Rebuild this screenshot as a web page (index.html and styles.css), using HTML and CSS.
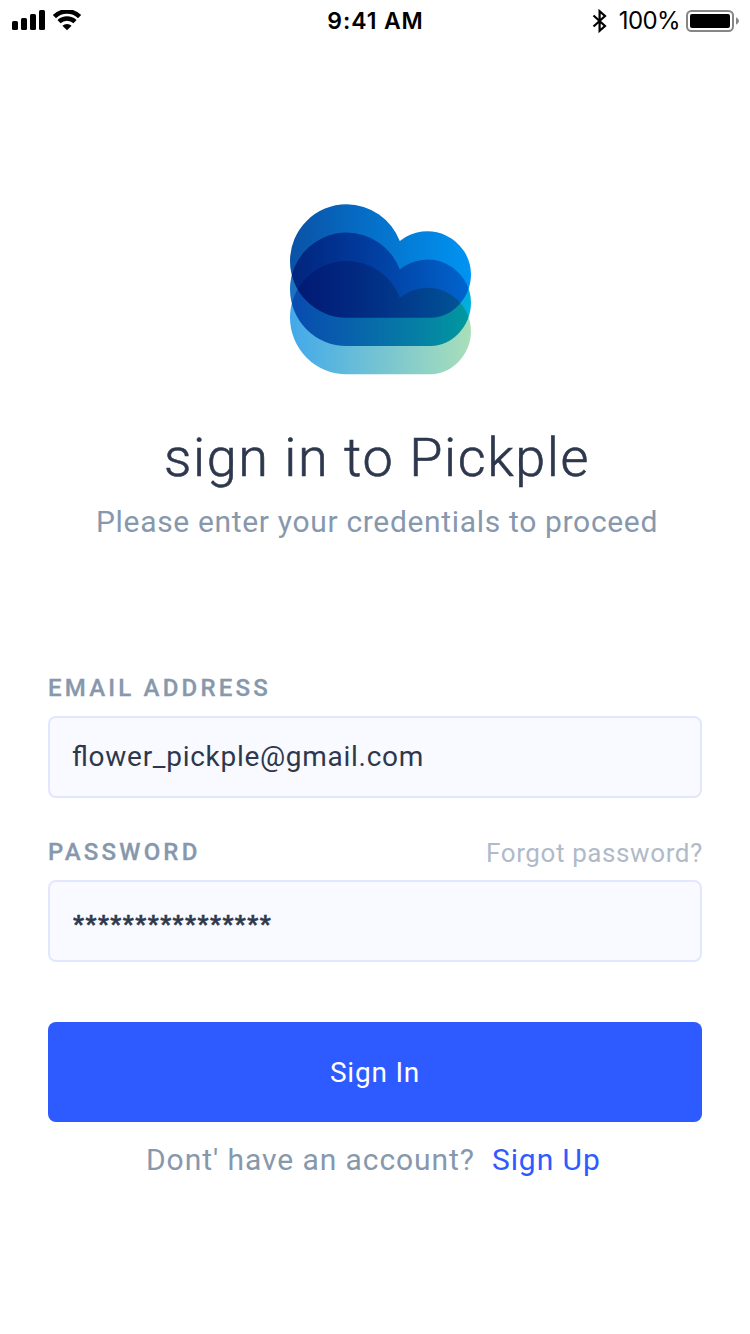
FILE: index.html
```html
<!DOCTYPE html>
<html lang="en">
<head>
<meta charset="utf-8">
<title>Pickple – Sign in</title>
<link rel="stylesheet" href="styles.css">
</head>
<body>
<div class="status">
  <svg class="signal" width="72" height="22" viewBox="0 0 72 22">
    <rect x="1" y="11" width="6" height="9" rx="1.5"/><rect x="10" y="8" width="6" height="12" rx="1.5"/><rect x="19" y="4" width="6" height="16" rx="1.5"/><rect x="28" y="0" width="6" height="20" rx="1.5"/>
    <path class="wave" d="M43.4 6.6a18 18 0 0 1 25.2 0M48 11.6a11.8 11.8 0 0 1 16 0"/>
    <path d="M56 20.3l-4.6-4.6a6.8 6.8 0 0 1 9.2 0z"/>
  </svg>
  <span class="time">9:41 AM</span>
  <div class="power">
    <svg class="bluetooth" width="16" height="24" viewBox="0 0 16 24"><path d="M1.5 6.5L13 17 7.6 21.8V2.2L13 7 1.5 17.5"/></svg>
    <span class="percent">100%</span>
    <svg width="54" height="24" viewBox="0 0 54 24"><rect class="case" x="1" y="2" width="46" height="20" rx="4.5"/><rect x="4" y="5" width="40" height="14" rx="2"/><path class="cap" d="M50 8.3q3 1.5 3 3.7t-3 3.7z"/></svg>
  </div>
</div>
<main class="page">
  <svg class="logo" width="182" height="172" viewBox="0 0 182 172">
    <defs>
      <linearGradient id="top"><stop offset="0" stop-color="#0a52a6"/><stop offset="1" stop-color="#0094f3"/></linearGradient>
      <linearGradient id="mid"><stop offset="0" stop-color="#1c70c0"/><stop offset="1" stop-color="#00b0da"/></linearGradient>
      <linearGradient id="low"><stop offset="0" stop-color="#42a9ea"/><stop offset="1" stop-color="#a9dfba"/></linearGradient>
      <path id="cloud" d="M56.7 0.3A56.7 56.7 0 1 0 56.7 113.7H141C162 113.7 181 94 181 70.5A43.6 43.6 0 0 0 109.8 37.1A56.7 56.7 0 0 0 56.7 0.3z"/>
    </defs>
    <use class="layer" href="#cloud" y="56.6" fill="url(#low)"/>
    <use class="layer" href="#cloud" y="28.3" fill="url(#mid)"/>
    <use class="layer" href="#cloud" fill="url(#top)"/>
  </svg>
  <h1 class="title">sign in to Pickple</h1>
  <p class="subtitle">Please enter your credentials to proceed</p>
  <form class="form">
    <div class="row"><label class="label" for="email">EMAIL ADDRESS</label></div>
    <input class="field address" id="email" type="text" value="flower_pickple@gmail.com">
    <div class="row second"><label class="label" for="password">PASSWORD</label><a class="forgot">Forgot password?</a></div>
    <input class="field secret" id="password" type="text" value="****************">
    <button class="submit" type="button">Sign In</button>
  </form>
  <p class="signup"><span>Dont' have an account?</span><a class="link">Sign Up</a></p>
</main>
</body>
</html>
```
FILE: styles.css
```css
* { box-sizing: border-box; }
body { margin: 0; height: 1334px; background: #fff; font-family: Roboto, "Open Sans", sans-serif; color: #2e384d; }
.status { height: 42px; padding: 0 10px 0 11px; display: grid; grid-template-columns: 1fr auto 1fr; align-items: center; color: #000; font-family: Inter, sans-serif; }
.time { font-size: 23px; font-weight: 600; line-height: 40px; letter-spacing: .9px; }
.power { display: flex; align-items: center; justify-content: flex-end; }
.percent { font-size: 24px; line-height: 40px; margin: 0 6px 0 11px; letter-spacing: -.6px; }
.wave { fill: none; stroke: #000; stroke-width: 4.6; }
.bluetooth { fill: none; stroke: #000; stroke-width: 2.2; }
.case { fill: none; stroke: #868686; stroke-width: 2; }
.cap { fill: #868686; }
.page { padding: 162px 48px 0; display: flex; flex-direction: column; }
.logo { display: block; margin-left: 242px; isolation: isolate; }
.layer { mix-blend-mode: multiply; }
.title { margin: 46px 0 0; padding-left: 4px; line-height: 72px; font-size: 54px; font-weight: 300; text-align: center; letter-spacing: 1.6px; white-space: nowrap; -webkit-text-stroke: .6px #2e384d; }
.subtitle { margin: 8px 0 0; padding-left: 4px; line-height: 40px; font-size: 30px; text-align: center; color: #8798ad; letter-spacing: .67px; white-space: nowrap; }
.form { margin-top: 130px; display: flex; flex-direction: column; }
.row { height: 44px; display: flex; justify-content: space-between; line-height: 32px; }
.second { margin-top: 38px; }
.label { font-size: 24px; font-weight: 500; color: #8798ad; letter-spacing: 3.2px; -webkit-text-stroke: .3px #8798ad; }
.forgot { font-size: 26px; line-height: 34px; color: #b0bac9; letter-spacing: .6px; margin-right: -1px; }
.field { width: 100%; height: 82px; border: 2px solid #e0e7ff; border-radius: 8px; padding: 0 22px; background: #f9faff; color: #2e384d; font-family: inherit; font-size: 28px; outline: 0; }
.address { padding-bottom: 2px; letter-spacing: .72px; font-feature-settings: "liga" 1; }
.secret { padding: 6px 22px 0 23px; font-size: 24px; font-weight: 700; letter-spacing: 1.55px; -webkit-text-stroke: .5px #2e384d; }
.submit { margin-top: 60px; height: 100px; border: 0; border-radius: 8px; background: #2e5bff; color: #fff; font-family: inherit; font-size: 28px; letter-spacing: .8px; }
.signup { margin: 18px 0 0; padding-left: 98px; display: flex; gap: 17px; line-height: 40px; font-size: 30px; color: #8798ad; letter-spacing: .93px; white-space: nowrap; }
.link { color: #2e5bff; }
```
